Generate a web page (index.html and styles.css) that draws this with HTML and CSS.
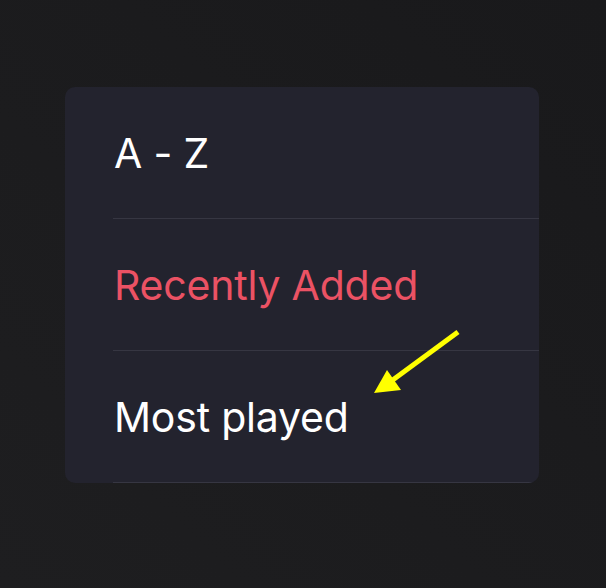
FILE: index.html
```html
<!DOCTYPE html>
<html lang="en">
<head>
    <meta charset="UTF-8">
    <meta name="viewport" content="width=device-width, initial-scale=1.0">
    <title>Sort</title>
    <link rel="stylesheet" href="styles.css">
</head>
<body>
    <div class="sort-menu">
        <div class="sort-item">A - Z</div>
        <div class="sort-item selected">Recently Added</div>
        <div class="sort-item">Most played</div>

        <!-- annotation arrow -->
        <svg class="arrow" width="100" height="80" viewBox="0 0 100 80">
            <line x1="93" y1="17" x2="25" y2="67" stroke="#ffff00" stroke-width="5"/>
            <polygon points="9,78 22,55 36,75" fill="#ffff00"/>
        </svg>
    </div>
</body>
</html>
```

FILE: styles.css
```css
body {
    margin: 0;
    padding: 87px 67px 105px 65px;
    background: linear-gradient(to top right, #1e1e20, #19191b);
    min-height: 588px;
    box-sizing: border-box;
    font-family: Inter, "Noto Sans", sans-serif;
}
.sort-menu {
    position: relative;
    background-color: #23232e;
    border-radius: 10px;
    overflow: hidden;
}
.sort-item {
    height: 131px;
    margin-left: 48px;
    padding-left: 1px;
    display: flex;
    align-items: center;
    font-size: 41px;
    letter-spacing: -0.2px;
    color: #ffffff;
    border-bottom: 1px solid #363642;
}
.sort-item.selected {
    color: #eb5264;
}
.arrow {
    position: absolute;
    left: 300px;
    top: 228px;
}
```
